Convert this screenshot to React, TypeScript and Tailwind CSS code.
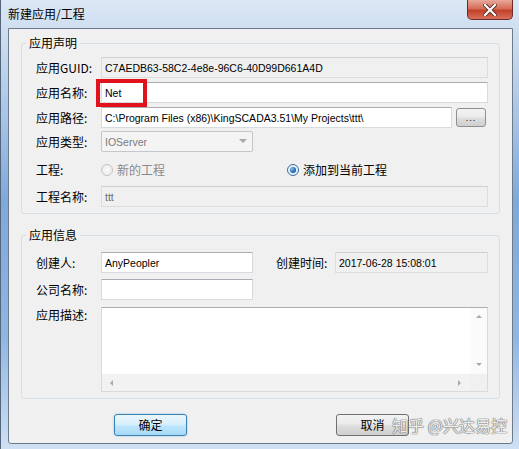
import React from 'react';

const cjk = "font-['Noto_Sans_CJK_SC','Noto_Sans',sans-serif]";
const latin = "font-['Liberation_Sans','Noto_Sans_CJK_SC',sans-serif]";

const Label = ({ children, w = 'w-[65px]' }: { children: React.ReactNode; w?: string }) => (
  <span className={`${w} shrink-0 text-[12px] leading-[16px] text-black ${cjk}`}>{children}</span>
);

const Field = ({ text = '', tone = 'white', w = 'flex-1', gray = false }: { text?: string; tone?: 'white' | 'ro'; w?: string; gray?: boolean }) => (
  <div
    className={`${w} h-[21px] flex items-center px-[3px] border border-[#d7dadf] border-t-[#abadb3] ${
      tone === 'ro' ? 'bg-[#f0f0f0] border-[#dcdcdc] border-t-[#d0d0d0]' : 'bg-white'
    }`}
  >
    <span className={`text-[10.5px] leading-[14px] ${latin} ${gray ? 'text-[#6d6d6d]' : 'text-black'}`}>{text}</span>
  </div>
);

const Row = ({ children, className = '' }: { children: React.ReactNode; className?: string }) => (
  <div className={`flex items-center h-[21px] ${className}`}>{children}</div>
);

const Arrow = ({ dir }: { dir: 'up' | 'down' | 'left' | 'right' }) => {
  const pts = {
    up: '1,5 4,2 7,5',
    down: '1,2 4,5 7,2',
    left: '5,1 2,4 5,7',
    right: '2,1 5,4 2,7',
  }[dir];
  return (
    <svg width="8" height="8" viewBox="0 0 8 8">
      <polygon points={pts} fill="#a9a9a9" />
    </svg>
  );
};

const App = () => {
  return (
    <div className="relative w-[519px] h-[449px] flex flex-col overflow-hidden border-l border-[#56667a] bg-[linear-gradient(180deg,#dbe7f4_0%,#c5d8ee_12%,#7ea9dc_45%,#8fb6e3_75%,#cfe0f3_100%)]">
      {/* title bar */}
      <div className="h-[28px] flex items-start justify-between shrink-0">
        <span className={`ml-[7px] mt-[5px] text-[12px] leading-[18px] text-black ${cjk}`}>新建应用/工程</span>
        <div className="mr-[6px] w-[46px] h-[20px] flex items-center justify-center rounded-b-[5px] border border-t-0 border-[#6b2d2a] bg-[linear-gradient(180deg,#e9a99a_0%,#d56d58_45%,#c3402a_55%,#d8705c_100%)]">
          <svg width="14" height="12" viewBox="0 0 14 12">
            <path d="M2 1 L12 11 M12 1 L2 11" stroke="#5a2a24" strokeWidth="4" strokeLinecap="square" />
            <path d="M2 1 L12 11 M12 1 L2 11" stroke="#ffffff" strokeWidth="2.2" strokeLinecap="square" />
          </svg>
        </div>
      </div>

      {/* client area */}
      <div className="relative flex-1 ml-[7px] mr-[6px] mb-[5px] flex flex-col border border-[#6d7a8a] rounded-b-[3px] bg-[#f0f0f0]">
        <fieldset className="mt-[6px] mx-[12px] border border-[#d5dfe5] rounded-[3px]">
          <legend className={`ml-[4px] px-[3px] text-[12px] leading-[16px] text-black ${cjk}`}>应用声明</legend>
          <div className="pl-[14px] pr-[11px] pt-[6px] pb-[6px] flex flex-col">
            <Row>
              <Label>应用GUID:</Label>
              <Field tone="ro" text="C7AEDB63-58C2-4e8e-96C6-40D99D661A4D" />
            </Row>
            <Row className="mt-[4px]">
              <Label>应用名称:</Label>
              <div className="relative flex-1 flex">
                <Field text="Net" />
                <div className="absolute left-[-5px] top-[-3px] w-[51px] h-[28px] border-[4px] border-[#e0121c]" />
              </div>
            </Row>
            <Row className="mt-[4px]">
              <Label>应用路径:</Label>
              <Field text="C:\Program Files (x86)\KingSCADA3.51\My Projects\ttt\" />
              <button className="ml-[4px] mr-[2px] w-[30px] h-[19px] flex items-center justify-center rounded-[3px] border border-[#8e8f8f] bg-[linear-gradient(180deg,#f2f2f2_0%,#ebebeb_45%,#dddddd_55%,#cfcfcf_100%)]">
                <span className={`text-[9px] leading-[10px] text-black tracking-[1px] ${latin}`}>...</span>
              </button>
            </Row>
            <Row className="mt-[3px]">
              <Label>应用类型:</Label>
              <div className="w-[152px] h-[21px] flex items-center justify-between pl-[3px] pr-[5px] rounded-[2px] border border-[#c4c7cb] bg-[#f4f4f4]">
                <span className={`text-[10.5px] leading-[14px] text-[#7a7a7a] ${latin}`}>IOServer</span>
                <svg width="8" height="5" viewBox="0 0 8 5">
                  <polygon points="0,0 8,0 4,4" fill="#a8a8a8" />
                </svg>
              </div>
            </Row>
            <Row className="mt-[7px]">
              <Label>工程:</Label>
              <div className="w-[186px] flex items-center">
                <span className="w-[12px] h-[12px] rounded-full border border-[#c3c3c3] bg-[radial-gradient(circle,#fafafa_0%,#e6e6e6_100%)]" />
                <span className={`ml-[4px] text-[12px] leading-[16px] text-[#8a8a8a] ${cjk}`}>新的工程</span>
              </div>
              <div className="flex items-center">
                <span className="w-[12px] h-[12px] rounded-full border border-[#3d6e98] bg-[#e8f1f9] flex items-center justify-center">
                  <span className="w-[6px] h-[6px] rounded-full bg-[radial-gradient(circle_at_35%_35%,#7fc1ef_0%,#2366b3_60%,#0f3f7a_100%)]" />
                </span>
                <span className={`ml-[4px] text-[12px] leading-[16px] text-black ${cjk}`}>添加到当前工程</span>
              </div>
            </Row>
            <Row className="mt-[6px]">
              <Label>工程名称:</Label>
              <Field tone="ro" gray text="ttt" />
            </Row>
          </div>
        </fieldset>

        <fieldset className="mt-[13px] mx-[12px] border border-[#d5dfe5] rounded-[3px]">
          <legend className={`ml-[4px] px-[3px] text-[12px] leading-[16px] text-black ${cjk}`}>应用信息</legend>
          <div className="pl-[14px] pr-[11px] pt-[9px] pb-[6px] flex flex-col">
            <Row>
              <Label>创建人:</Label>
              <Field w="w-[152px]" text="AnyPeopler" />
              <span className={`ml-[23px] w-[59px] text-[12px] leading-[16px] text-black ${cjk}`}>创建时间:</span>
              <Field tone="ro" text="2017-06-28 15:08:01" />
            </Row>
            <Row className="mt-[6px]">
              <Label>公司名称:</Label>
              <Field w="w-[152px]" />
            </Row>
            <div className="mt-[7px] flex items-start">
              <Label>应用描述:</Label>
              <div className="flex-1 h-[85px] grid grid-cols-[1fr_17px] grid-rows-[1fr_17px] border border-[#d7dadf] border-t-[#abadb3] bg-white">
                <div className="bg-white" />
                <div className="flex flex-col items-center justify-between py-[5px] bg-[#fbfbfb]">
                  <Arrow dir="up" />
                  <Arrow dir="down" />
                </div>
                <div className="flex items-center justify-between px-[6px] bg-[#f2f2f2]">
                  <Arrow dir="left" />
                  <Arrow dir="right" />
                </div>
                <div className="bg-[#f0f0f0]" />
              </div>
            </div>
          </div>
        </fieldset>

        <div className="mt-[15px] flex">
          <button className="ml-[105px] w-[73px] h-[22px] flex items-center justify-center rounded-[3px] border border-[#3c7fb1] bg-[linear-gradient(180deg,#eaf6fd_0%,#d9f0fc_45%,#bee6fd_55%,#a7d9f5_100%)] shadow-[0_0_2px_#7fc4ea]">
            <span className={`text-[12px] leading-[16px] text-black ${cjk}`}>确定</span>
          </button>
          <button className="ml-[149px] w-[73px] h-[22px] flex items-center justify-center rounded-[3px] border border-[#707070] bg-[linear-gradient(180deg,#f2f2f2_0%,#ebebeb_45%,#dddddd_55%,#cfcfcf_100%)]">
            <span className={`text-[12px] leading-[16px] text-black ${cjk}`}>取消</span>
          </button>
        </div>

        {/* watermark */}
        <span
          className={`absolute right-[5px] bottom-[7px] text-[16px] leading-[22px] text-[#ececec] [text-shadow:0_0_1px_#6f6f6f,0_0_1px_#6f6f6f,0_0_1px_#6f6f6f] ${cjk}`}
        >
          知乎 @兴达易控
        </span>
      </div>
    </div>
  );
};

export default App;
